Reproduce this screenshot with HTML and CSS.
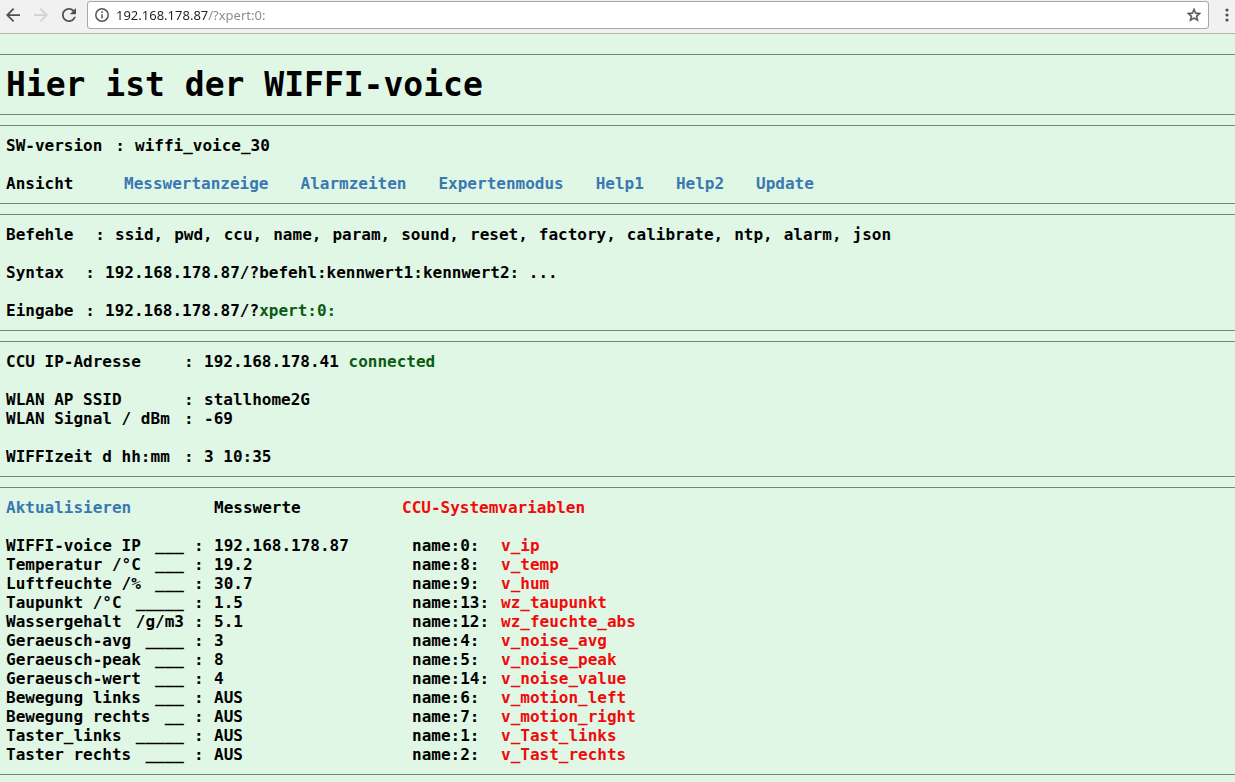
FILE: index.html
```
<!DOCTYPE html>
<html lang="de">
<head>
  <meta charset="UTF-8">
  <title>WIFFI-voice</title>
  <link rel="stylesheet" href="styles.css">
</head>
<body>

<form class="toolbar">
  <button type="button" class="tool" aria-label="Zurück">
    <svg viewBox="4 4 16 16"><path d="M20 11H7.83l5.59-5.59L12 4l-8 8 8 8 1.41-1.41L7.83 13H20v-2z"/></svg>
  </button>
  <button type="button" class="tool" aria-label="Vorwärts" disabled>
    <svg viewBox="4 4 16 16"><path d="M12 4l-1.41 1.41L16.17 11H4v2h12.17l-5.58 5.59L12 20l8-8z"/></svg>
  </button>
  <button type="button" class="tool" aria-label="Neu laden">
    <svg viewBox="4 4 16 16"><path d="M17.65 6.35C16.2 4.9 14.21 4 12 4c-4.42 0-7.99 3.58-7.99 8s3.57 8 7.99 8c3.73 0 6.84-2.55 7.73-6h-2.08c-.82 2.33-3.04 4-5.65 4-3.31 0-6-2.69-6-6s2.69-6 6-6c1.66 0 3.14.69 4.22 1.78L13 11h7V4l-2.35 2.35z"/></svg>
  </button>
  <div class="address">
    <svg class="info" viewBox="0 0 14 14"><circle cx="7" cy="7" r="6.2"/><path d="M7 6.2v4.3M7 3.3v1.6"/></svg>
    <input type="text" aria-label="Adresse" value="192.168.178.87/?xpert:0:">
    <button type="button" class="tool" aria-label="Lesezeichen">
      <svg class="stern" viewBox="2 2 20 19"><path d="M22 9.24l-7.19-.62L12 2 9.19 8.63 2 9.24l5.46 4.73L5.82 21 12 17.27 18.18 21l-1.63-7.03L22 9.24zM12 15.4l-3.76 2.27 1-4.28-3.32-2.88 4.38-.38L12 6.1l1.71 4.04 4.38.38-3.32 2.88 1 4.28L12 15.4z"/></svg>
    </button>
  </div>
  <button type="button" class="menu" aria-label="Menü">
    <svg viewBox="0 0 4 14"><circle cx="2" cy="2" r="1.6"/><circle cx="2" cy="7" r="1.6"/><circle cx="2" cy="12" r="1.6"/></svg>
  </button>
</form>

<main>
  <section>
    <h1>Hier ist der WIFFI-voice</h1>
  </section>

  <section>
    <div class="zeile"><span class="version">SW-version <b>:</b></span>wiffi_voice_30</div>
    <nav class="zeile">
      <span class="ansicht">Ansicht</span>
      <div class="links">
        <a href="#">Messwertanzeige</a>
        <a href="#">Alarmzeiten</a>
        <a href="#">Expertenmodus</a>
        <a href="#">Help1</a>
        <a href="#">Help2</a>
        <a href="#">Update</a>
      </div>
    </nav>
  </section>

  <section>
    <div class="zeile">
      <span class="feld breit">Befehle <b>:</b></span>
      <ul class="befehle">
        <li>ssid,</li>
        <li>pwd,</li>
        <li>ccu,</li>
        <li>name,</li>
        <li>param,</li>
        <li>sound,</li>
        <li>reset,</li>
        <li>factory,</li>
        <li>calibrate,</li>
        <li>ntp,</li>
        <li>alarm,</li>
        <li>json</li>
      </ul>
    </div>
    <div class="zeile"><span class="feld">Syntax <b>:</b></span>192.168.178.87/?befehl:kennwert1:kennwert2: ...</div>
    <div class="zeile"><span class="feld">Eingabe <b>:</b></span>192.168.178.87/?<span class="gruen">xpert:0:</span></div>
  </section>

  <section>
    <table class="status">
      <tr class="abstand"><th>CCU IP-Adresse</th><td class="dp">:</td><td>192.168.178.41 <span class="gruen">connected</span></td></tr>
      <tr><th>WLAN AP SSID</th><td class="dp">:</td><td>stallhome2G</td></tr>
      <tr class="abstand"><th>WLAN Signal / dBm</th><td class="dp">:</td><td>-69</td></tr>
      <tr><th>WIFFIzeit d hh:mm</th><td class="dp">:</td><td>3 10:35</td></tr>
    </table>
  </section>

  <section>
    <table class="messwerte">
      <thead>
        <tr class="abstand"><th><a href="#">Aktualisieren</a></th><td class="dp"></td><th class="wert">Messwerte</th><th class="rot" colspan="2">CCU-Systemvariablen</th></tr>
      </thead>
      <tbody>
        <tr><th><div class="label">WIFFI-voice IP <span>___</span></div></th><td class="dp">:</td><td class="wert">192.168.178.87</td><td class="name">name:0:</td><td class="rot">v_ip</td></tr>
        <tr><th><div class="label">Temperatur /°C <span>___</span></div></th><td class="dp">:</td><td>19.2</td><td class="name">name:8:</td><td class="rot">v_temp</td></tr>
        <tr><th><div class="label">Luftfeuchte /% <span>___</span></div></th><td class="dp">:</td><td>30.7</td><td class="name">name:9:</td><td class="rot">v_hum</td></tr>
        <tr><th><div class="label">Taupunkt /°C <span>_____</span></div></th><td class="dp">:</td><td>1.5</td><td class="name">name:13:</td><td class="rot">wz_taupunkt</td></tr>
        <tr><th><div class="label">Wassergehalt <span>/g/m3</span></div></th><td class="dp">:</td><td>5.1</td><td class="name">name:12:</td><td class="rot">wz_feuchte_abs</td></tr>
        <tr><th><div class="label">Geraeusch-avg <span>____</span></div></th><td class="dp">:</td><td>3</td><td class="name">name:4:</td><td class="rot">v_noise_avg</td></tr>
        <tr><th><div class="label">Geraeusch-peak <span>___</span></div></th><td class="dp">:</td><td>8</td><td class="name">name:5:</td><td class="rot">v_noise_peak</td></tr>
        <tr><th><div class="label">Geraeusch-wert <span>___</span></div></th><td class="dp">:</td><td>4</td><td class="name">name:14:</td><td class="rot">v_noise_value</td></tr>
        <tr><th><div class="label">Bewegung links <span>___</span></div></th><td class="dp">:</td><td>AUS</td><td class="name">name:6:</td><td class="rot">v_motion_left</td></tr>
        <tr><th><div class="label">Bewegung rechts <span>__</span></div></th><td class="dp">:</td><td>AUS</td><td class="name">name:7:</td><td class="rot">v_motion_right</td></tr>
        <tr><th><div class="label">Taster_links <span>_____</span></div></th><td class="dp">:</td><td>AUS</td><td class="name">name:1:</td><td class="rot">v_Tast_links</td></tr>
        <tr><th><div class="label">Taster rechts <span>____</span></div></th><td class="dp">:</td><td>AUS</td><td class="name">name:2:</td><td class="rot">v_Tast_rechts</td></tr>
      </tbody>
    </table>
  </section>
</main>

</body>
</html>
```
FILE: styles.css
```
body {
  margin: 0;
  background: #e0f7e6;
  color: #000;
  font-family: "DejaVu Sans Mono", monospace;
  font-size: 16px;
  font-weight: bold;
  line-height: 19px;
}

/* Browserleiste */
.toolbar {
  display: flex;
  align-items: center;
  padding: 1px 6px 4px 6px;
  background: #f2f1f2;
  border-bottom: 1px solid #b4b4b4;
}
.toolbar button {
  flex: none;
  padding: 0;
  border: none;
  background: none;
}
.toolbar svg {
  display: block;
  width: 100%;
  fill: #505050;
}
.tool {
  width: 14px;
  margin-right: 14px;
}
.tool:disabled svg {
  fill: #d0d0d0;
}
.address {
  flex: 1;
  display: flex;
  align-items: center;
  box-sizing: border-box;
  height: 28px;
  margin-left: -3px;
  padding: 0 7px;
  background: #fff;
  border: 1px solid #a8a8a8;
  border-radius: 3px;
}
.address .tool {
  margin-right: 0;
}
.address .info {
  flex: none;
  width: 14px;
  fill: none;
  stroke: #555;
  stroke-width: 1.5;
}
.address .stern {
  stroke: #505050;
  stroke-width: 0.6;
}
.address input {
  flex: 1;
  min-width: 0;
  padding: 0;
  margin-left: 7px;
  border: none;
  outline: none;
  font-family: "Noto Sans", sans-serif;
  font-size: 13px;
  line-height: 20px;
  color: transparent;
  /* Host dunkel, Pfad grau */
  background: linear-gradient(90deg, #222 92px, #888 92px);
  -webkit-background-clip: text;
  background-clip: text;
}
.toolbar .menu {
  width: 4px;
  margin-left: 16px;
}

main {
  display: flex;
  flex-direction: column;
  gap: 10px;
  padding-top: 20px;
}
section {
  padding: 10px 6px;
  border-top: 1px solid #7a827c;
  border-bottom: 1px solid #7a827c;
}
h1 {
  margin: 0;
  font-size: 33px;
  line-height: 39px;
}
a {
  color: #3a78b2;
  text-decoration: none;
}
.gruen {
  color: #0a5c10;
}
.rot {
  color: #f00a0a;
}

.zeile {
  display: flex;
}
.zeile + .zeile {
  margin-top: 19px;
}
.version, .feld {
  display: flex;
  justify-content: space-between;
  box-sizing: border-box;
  width: 99px;
  padding-right: 10px;
}
.version {
  width: 129px;
}
.ansicht {
  width: 118px;
}
.links {
  display: flex;
  gap: 32px;
}
.feld.breit {
  width: 109px;
}
.befehle {
  display: flex;
  gap: 11px;
  margin: 0;
  padding: 0;
  list-style: none;
}

table {
  border-collapse: collapse;
}
th, td {
  padding: 0;
  text-align: left;
  vertical-align: top;
}
.abstand th, .abstand td {
  padding-bottom: 19px;
}
.status th {
  width: 178px;
}
.dp {
  width: 20px;
}
.messwerte th:first-child {
  width: 188px;
}
.label {
  display: flex;
  justify-content: space-between;
  width: 178px;
}
.wert {
  width: 188px;
}
.name {
  width: 89px;
  padding-left: 10px;
}
```
